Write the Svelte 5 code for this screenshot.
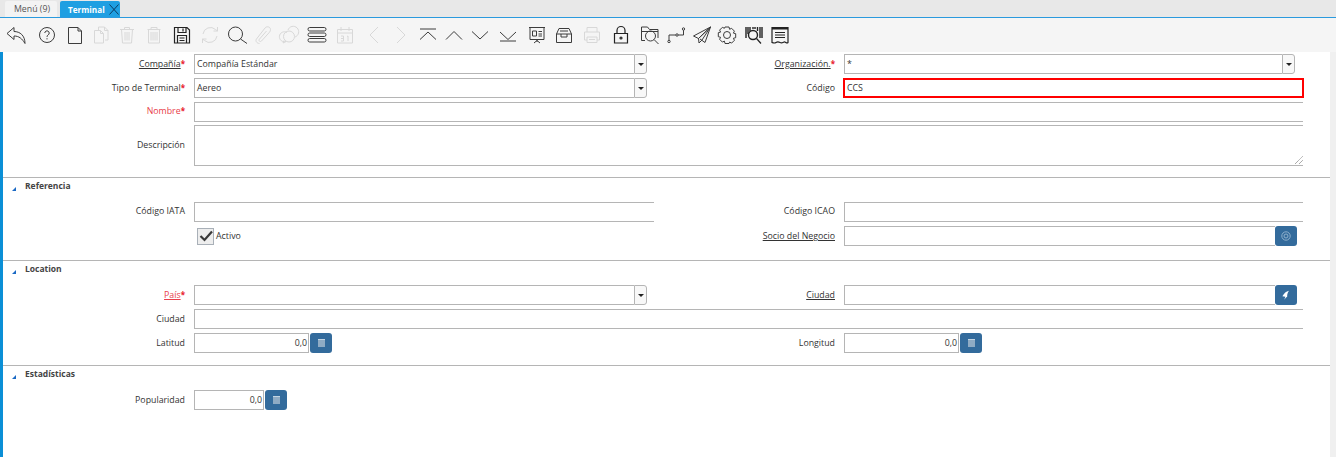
<script>
  const rawIcons = [
    { cx: 17, off: false, svg: '<path d="M3 10.500 10 4.500V8.500C16 8.500 21 12.500 21 20.500 18 15.500 15 13 10 13V16.500Z"/>' },
    { cx: 48, off: false, svg: '<circle cx="12" cy="12" r="7.500"/><path d="M9.800 10a2.200 2.200 0 1 1 3.400 1.900c-.8.500-1.200 1-1.200 2M12 15.200v1.200"/>' },
    { cx: 75, off: false, svg: '<path d="M5.500 4.500H15L18.500 8V20.500H5.500ZM15 4.500V8H18.500"/>' },
    { cx: 100, off: true, svg: '<path d="M9.500 7V4h6l3.500 3.500V17h-3M15.500 4v3.500H19M5.500 7.500h6l3 3V20h-9ZM11.500 7.500v3h3"/>' },
    { cx: 127, off: true, svg: '<path d="M5 6.500h14M9.500 6.500V4.500h5v2M6.500 6.500l1 13.500h9l1-13.500M10 9v8.500M12 9v8.500M14 9v8.500"/>' },
    { cx: 153, off: true, svg: '<path d="M5.500 6.500h13M9 6.500V4.500h6v2M6.500 6.500V20h11V6.500M9 9v8.500M11 9v8.500M13 9v8.500M15 9v8.500"/>' },
    { cx: 181, off: false, dark: true, svg: '<path d="M4.500 4.500H17L19.500 7V20H4.500ZM8 4.500V9.500H16V4.500M13 5.500V8.500M7.500 20V12.500H16.500V20M9.500 15h5M9.500 17.500h5"/>' },
    { cx: 211, off: true, svg: '<path d="M5 11a7.500 7.500 0 0 1 12.500-4.500L19.500 8M19.500 4v4h-4M19 13a7.500 7.500 0 0 1-12.500 4.500L4.500 16M4.500 20v-4h4"/>' },
    { cx: 238, off: false, svg: '<circle cx="9.500" cy="11" r="7"/><path d="M14.500 16 21 20.500"/>' },
    { cx: 263, off: true, svg: '<path d="M8.500 20.500c-2.500 0-4.500-2.500-3-4.500L14 5c2-2.300 5.500-1 5.500 1.500 0 1.200-.6 2.200-1.500 3.300L10.500 18c-1.200 1.300-3.300 0-2.200-1.700L15.500 8"/>' },
    { cx: 289, off: true, svg: '<path d="M9 9.500a5 5 0 1 0-1 9l-3 1.500 1-2.500M10 7a5.500 5.500 0 1 1 7 7"/><circle cx="11" cy="13.500" r="5.500"/>' },
    { cx: 317, off: false, svg: '<rect x="3" y="4.500" width="18" height="3.500" rx="1.700"/><rect x="3" y="10" width="18" height="3.500" rx="1.700"/><rect x="3" y="15.500" width="18" height="3.500" rx="1.700"/>' },
    { cx: 344, off: true, svg: '<path d="M4.500 6.500h15V20h-15ZM4.500 10h15M8 4v4M16 4v4M8 13h2.500v5H8M10.500 15.500H8M14 13.500l1-.5v5"/>' },
    { cx: 375, off: true, svg: '<path d="M16 4 8 12l8 8"/>' },
    { cx: 401, off: true, svg: '<path d="M8 4l8 8-8 8"/>' },
    { cx: 428, off: false, svg: '<path d="M4 6h16M4 16.500 12 9l8 7.500"/>' },
    { cx: 454, off: false, svg: '<path d="M4 16.500 12 8.500l8 8"/>' },
    { cx: 480, off: false, svg: '<path d="M4 8.500 12 16l8-7.500"/>' },
    { cx: 506, off: false, svg: '<path d="M4 9 12 16.500 20 9M4 18h16"/>' },
    { cx: 538, off: false, svg: '<path d="M4 4.500h16M5 4.500V16.500H19V4.500M12 16.500V19M12 17.500 9 20M12 17.500 15 20M7.500 8h4v5h-4ZM13.500 8.500h3.500M13.500 11h3.500M13.500 13h3.500"/>' },
    { cx: 564, off: false, svg: '<path d="M7 5.500h10l2.500 5.500v8.500h-15V11ZM4.500 11h15M8 8h8M9 11v3h6v-3"/>' },
    { cx: 591, off: true, svg: '<path d="M7 9V4.500h10V9M4.500 9h15v8H17M7 17H4.500V9M7 14h10v5.500H7ZM9 16.500h6"/>' },
    { cx: 622, off: false, dark: true, svg: '<path d="M8 10.500V7.500a4 4 0 0 1 8 0v3M5.500 10.500h13V20h-13Z"/><circle cx="12" cy="15" r="1"/>' },
    { cx: 649, off: false, svg: '<path d="M7 17.500H3.500V4h6l2 2.500H20V15M3.500 8.500H20"/><circle cx="12.500" cy="13" r="5"/><path d="M16 16.500 20.500 21"/>' },
    { cx: 679, off: false, svg: '<circle cx="4" cy="18.500" r="1.200"/><circle cx="12" cy="12" r="1.200"/><circle cx="18.500" cy="6" r="1.200"/><path d="M4 17.300V12H10.800M13.200 12H18.500V7.200"/>' },
    { cx: 701, off: false, svg: '<path d="M20.500 4 3.500 13l5 2.500ZM20.500 4 8.500 15.500 9 20l3-3ZM20.500 4 15 19.500 10 16"/>' },
    { cx: 727, off: false, svg: '<path d="M10 4h4l.6 2.300 2-1 2.800 2.800-1 2 2.300.6v4l-2.300.6 1 2-2.800 2.800-2-1L14 20.500h-4l-.6-2.400-2 1-2.800-2.800 1-2L3.300 13.700v-4l2.300-.6-1-2 2.800-2.800 2 1Z"/><circle cx="12" cy="12" r="3.500"/>' },
    { cx: 754, off: false, dark: true, svg: '<path d="M4 4v11M6 4v7M8 4v4M11 4v2M13 4v2M15.500 4v4M18 4v11M20 4v11" stroke-width="1.400"/><circle cx="11" cy="12" r="4.500" stroke-width="1.400"/><path d="M14.500 15.500 19 20.500" stroke-width="1.200"/>' },
    { cx: 780, off: false, dark: true, svg: '<path d="M4 4.500h16V19.500c-1.500 1.500-2.500-1-4-.5s-2 1.500-4 .5-2.500-1-4 0-2.500.5-4 0Z"/><path d="M4 5.500h16" stroke-width="2"/><path d="M7 9.500h10M7 12h10M7 14.500h10"/>' }
  ];
  const icons = rawIcons.map((icon, i) => {
    const prev = i ? (rawIcons[i - 1].cx + icon.cx) / 2 : 0;
    const next = i < rawIcons.length - 1 ? (icon.cx + rawIcons[i + 1].cx) / 2 : icon.cx + 13;
    return { ...icon, width: next - prev };
  });
</script>

<div class="shell">
  <div class="tabs">
    <div class="tab">Menú (9)</div>
    <div class="tab active">
      <span>Terminal</span>
      <svg class="close" viewBox="0 0 10 11" width="10" height="11"><path d="M.5.5l9 10M9.500.5l-9 10" /></svg>
    </div>
  </div>

  <div class="toolbar">
    {#each icons as icon}
      <div class="tool" style="width:{icon.width}px">
        <svg class="icon" class:off={icon.off} class:dark={icon.dark} viewBox="0 0 24 24" width="24" height="24">{@html icon.svg}</svg>
      </div>
    {/each}
  </div>

  <div class="body">
    <div class="content">
      <section class="sec first">
        <div class="rows">
          <div class="row">
            <div class="lab"><u>Compañía</u><i>*</i></div>
            <div class="combo"><div class="input">Compañía Estándar</div><div class="arrow"><b></b></div></div>
            <div class="lab"><u>Organización.</u><i>*</i></div>
            <div class="combo right"><div class="input">*</div><div class="arrow"><b></b></div></div>
          </div>
          <div class="row">
            <div class="lab">Tipo de Terminal<i>*</i></div>
            <div class="combo"><div class="input">Aereo</div><div class="arrow"><b></b></div></div>
            <div class="lab">Código</div>
            <div class="input focus">CCS</div>
          </div>
          <div class="row">
            <div class="lab req high">Nombre<i>*</i></div>
            <div class="input wide"></div>
          </div>
          <div class="row area-row">
            <div class="lab high">Descripción</div>
            <div class="input wide area">
              <svg class="grip" viewBox="0 0 8 8" width="8" height="8"><path d="M0 8 8 0M4 8l4-4" /></svg>
            </div>
          </div>
        </div>
      </section>

      <section class="sec tall">
        <h3><span class="tri"></span>Referencia</h3>
        <div class="rows">
          <div class="row">
            <div class="lab high">Código IATA</div>
            <div class="input"></div>
            <div class="lab high">Código ICAO</div>
            <div class="input"></div>
          </div>
          <div class="row">
            <div></div>
            <div class="check">
              <span class="box"><svg viewBox="0 0 16 16" width="16" height="16"><path d="M2.500 8 6.500 12 14 3.500" /></svg></span>
              <span>Activo</span>
            </div>
            <div class="lab"><u>Socio del Negocio</u></div>
            <div class="with-btn">
              <div class="input grow"></div>
              <div class="btn search">
                <svg viewBox="0 0 10 10" width="10" height="10"><circle cx="5" cy="5" r="4.200" /><circle cx="5" cy="5" r="2" /></svg>
              </div>
            </div>
          </div>
        </div>
      </section>

      <section class="sec">
        <h3><span class="tri"></span>Location</h3>
        <div class="rows">
          <div class="row">
            <div class="lab req"><u>País</u><i>*</i></div>
            <div class="combo"><div class="input"></div><div class="arrow"><b></b></div></div>
            <div class="lab"><u>Ciudad</u></div>
            <div class="with-btn">
              <div class="input grow"></div>
              <div class="btn">
                <svg viewBox="0 0 10 10" width="12" height="12"><path class="solid" d="M7.500 1.500C5 2 3.500 3.500 2 6l2.500.5L3.500 9C4.500 8 5 7 6 6.500 5.800 4.500 6.500 3 7.500 1.500Z" /></svg>
              </div>
            </div>
          </div>
          <div class="row">
            <div class="lab">Ciudad</div>
            <div class="input wide"></div>
          </div>
          <div class="row">
            <div class="lab">Latitud</div>
            <div class="num"><div class="input value">0,0</div><div class="btn calc"><span></span></div></div>
            <div class="lab">Longitud</div>
            <div class="num"><div class="input value">0,0</div><div class="btn calc"><span></span></div></div>
          </div>
        </div>
      </section>

      <section class="sec last">
        <h3><span class="tri"></span>Estadísticas</h3>
        <div class="rows">
          <div class="row">
            <div class="lab">Popularidad</div>
            <div class="num small"><div class="input value">0,0</div><div class="btn calc"><span></span></div></div>
          </div>
        </div>
      </section>
    </div>
    <div class="scroll"></div>
  </div>
</div>

<style>
  :global(body) {
    margin: 0;
    background: #fff;
    overflow: hidden;
  }
  .shell {
    width: 1336px;
    height: 457px;
    display: flex;
    flex-direction: column;
    font-family: "Open Sans", "Liberation Sans", sans-serif;
    font-size: 8.8px;
    color: #333;
    overflow: hidden;
  }
  .tabs {
    height: 17px;
    flex: none;
    display: flex;
    gap: 3px;
    padding: 1px 0 0 5px;
    box-sizing: border-box;
    background: #e8e8e8;
  }
  .tab {
    width: 52px;
    padding-left: 2px;
    box-sizing: border-box;
    display: flex;
    align-items: center;
    justify-content: center;
    background: #f3f3f3;
    color: #555;
    border-radius: 2px 2px 0 0;
  }
  .tab.active {
    width: 60px;
    justify-content: flex-start;
    padding-left: 8px;
    background: #1f9fe2;
    color: #fff;
    font-size: 8.2px;
    font-weight: 700;
    position: relative;
  }
  .close {
    position: absolute;
    right: 1px;
    top: 3px;
  }
  .close path {
    fill: none;
    stroke: #0c3d63;
    stroke-width: 1;
  }
  .toolbar {
    height: 35px;
    flex: none;
    display: flex;
    box-sizing: border-box;
    border-top: 1px solid #2a9ade;
    background: #f5f5f5;
  }
  .tool {
    display: flex;
    justify-content: center;
    align-items: center;
    flex: none;
  }
  .icon {
    flex: none;
    fill: none;
    stroke: #3c3c3c;
    stroke-width: 1;
  }
  .icon.dark {
    stroke: #222;
    stroke-width: 1.2;
  }
  .icon.off {
    stroke: #d8d8d8;
  }
  .body {
    flex: 1;
    display: flex;
    min-height: 0;
  }
  .content {
    flex: 1;
    border-left: 3px solid #0b8fd6;
    min-width: 0;
  }
  .scroll {
    width: 6px;
    flex: none;
    background: #f0f0f0;
  }
  .sec {
    padding-bottom: 12px;
    border-bottom: 1px solid #b5b5b5;
  }
  .sec.first {
    padding-top: 2px;
    padding-bottom: 11px;
  }
  .sec.tall {
    padding-bottom: 14px;
  }
  .sec.last {
    border-bottom: 0;
  }
  h3 {
    margin: 0;
    height: 24px;
    padding: 1px 0 0 22px;
    box-sizing: border-box;
    font-size: 8.5px;
    line-height: 13px;
    font-weight: 700;
    color: #444;
    position: relative;
  }
  .tri {
    position: absolute;
    left: 9px;
    top: 9px;
    width: 0;
    height: 0;
    border-left: 4px solid transparent;
    border-bottom: 4px solid #1a69c4;
  }
  .rows {
    display: flex;
    flex-direction: column;
    gap: 4px;
  }
  .row {
    display: grid;
    grid-template-columns: 191px 460px 190px 459px;
    height: 20px;
    align-items: center;
  }
  .area-row {
    height: 41px;
    margin-top: -1px;
  }
  .lab {
    padding-right: 9px;
    text-align: right;
    white-space: nowrap;
  }
  .lab.high {
    padding-bottom: 2px;
  }
  .lab i {
    color: #e8202a;
    font-style: normal;
    font-weight: 700;
    font-size: 8px;
  }
  .lab.req {
    color: #e8404a;
  }
  .input {
    height: 20px;
    box-sizing: border-box;
    border: 1px solid #b5b5b5;
    border-right: 0;
    padding: 0 2px;
    line-height: 19px;
    background: #fff;
    white-space: nowrap;
  }
  .wide {
    grid-column: 2 / 5;
  }
  .area {
    height: 41px;
    position: relative;
  }
  .grip {
    position: absolute;
    right: 0;
    bottom: 1px;
  }
  .grip path {
    stroke: #555;
    stroke-width: 0.7;
    stroke-dasharray: 1 0.6;
    fill: none;
  }
  .focus {
    border: 2px solid #f00;
    margin: 0 -1px;
    padding-left: 2px;
    line-height: 16px;
  }
  .combo {
    display: flex;
    width: 453px;
  }
  .combo.right {
    width: 451px;
  }
  .combo .input {
    flex: 1;
  }
  .arrow {
    width: 13px;
    height: 20px;
    box-sizing: border-box;
    border: 1px solid #b5b5b5;
    border-radius: 0 3px 3px 0;
    background: #f8f8f8;
    display: flex;
    align-items: center;
    justify-content: center;
  }
  .arrow b {
    width: 0;
    height: 0;
    border: 3px solid transparent;
    border-top: 3px solid #222;
    border-bottom: 0;
  }
  .with-btn {
    display: flex;
    width: 453px;
  }
  .grow {
    flex: 1;
  }
  .btn {
    width: 22px;
    height: 20px;
    flex: none;
    border-radius: 3px;
    background: #336b9c;
    display: flex;
    align-items: center;
    justify-content: center;
  }
  .btn svg {
    fill: none;
    stroke: #8fb0cc;
    stroke-width: 1;
  }
  .btn .solid {
    fill: #fff;
    stroke: none;
  }
  .calc span {
    width: 7px;
    height: 7px;
    background: #8fabc4;
    border-top: 1px solid #c3d4e2;
  }
  .num {
    display: flex;
    gap: 1px;
    width: 138px;
  }
  .num.small {
    width: 93px;
  }
  .value {
    flex: 1;
    text-align: right;
    padding-right: 1px;
    border-right: 1px solid #b5b5b5;
  }
  .check {
    display: flex;
    align-items: center;
    gap: 2px;
    padding-left: 3px;
  }
  .box {
    width: 17px;
    height: 17px;
    box-sizing: border-box;
    border: 1px solid #a9b0b8;
    background: #eee;
    display: flex;
    align-items: center;
    justify-content: center;
  }
  .box svg {
    flex: none;
    fill: none;
    stroke: #3a3a3a;
    stroke-width: 2.2;
  }
</style>
